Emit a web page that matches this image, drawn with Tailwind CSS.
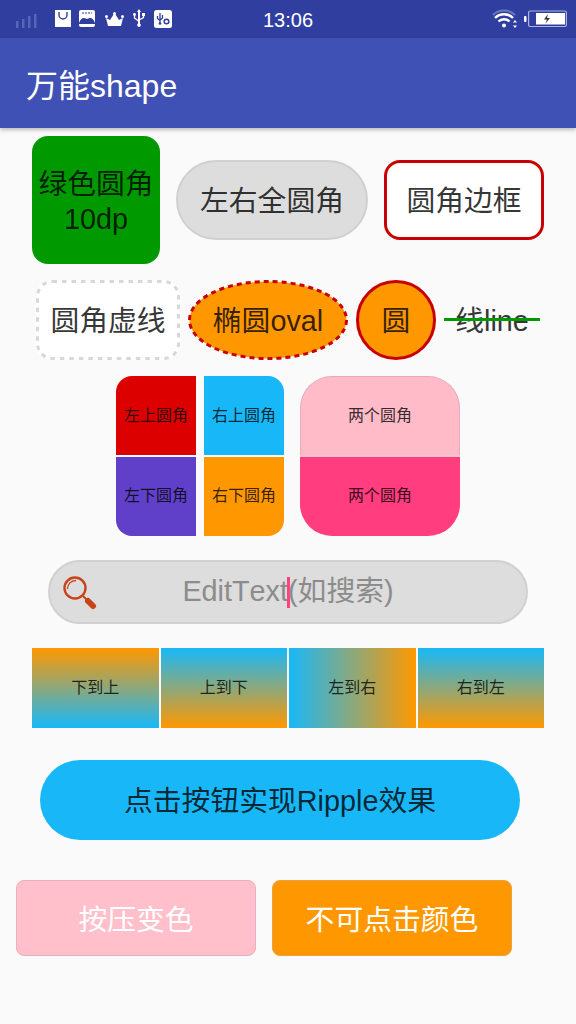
<!DOCTYPE html>
<html lang="zh-CN">
<head>
    <meta charset="UTF-8">
    <meta name="viewport" content="width=device-width, initial-scale=1.0">
    <title>万能shape</title>
    <script src="https://cdn.jsdelivr.net/npm/@tailwindcss/browser@4"></script>
</head>
<body class="bg-[#fafafa] h-[1024px] w-[576px] overflow-hidden font-['Liberation_Sans','Noto_Sans_CJK_SC',sans-serif] text-black/80">
    <!-- Status bar -->
    <div class="h-[38px] bg-[#303f9f] grid grid-cols-[1fr_auto_1fr] items-center pl-[16px] pr-[9px] text-white">
        <div class="flex items-center">
            <svg width="22" height="14" viewBox="0 0 22 14" class="mt-[4px]" fill="#5566b4">
                <rect x="0" y="7" width="2.500" height="7"/><rect x="6" y="5" width="2.500" height="9"/><rect x="12" y="2" width="2.500" height="12"/><rect x="18" y="0" width="2.500" height="14"/>
            </svg>
            <!-- bag -->
            <svg width="16" height="17" viewBox="0 0 16 17" class="ml-[17px] -mt-[1px]">
                <path d="M0 0h16v17H0z" fill="#fff"/><path d="M4 2v3a4 4 0 0 0 8 0V2" fill="none" stroke="#303f9f" stroke-width="1.400"/>
            </svg>
            <!-- bed-like app icon -->
            <svg width="16" height="17" viewBox="0 0 16 17" class="ml-[8px] -mt-[1px]">
                <rect width="16" height="17" rx="2" fill="#fff"/><path d="M3 3h10" stroke="#303f9f" stroke-width="1.200" stroke-dasharray="2 1"/><path d="M0 13c2-5 4-6 8-4 4-2 6-1 8 4v1H0z" fill="#303f9f"/>
            </svg>
            <!-- crown -->
            <svg width="19" height="15" viewBox="0 0 19 15" class="ml-[10px]" fill="#fff">
                <path d="M3 14 1 6l4 2 4.500-7L14 8l4-2-2 8z"/><circle cx="1.500" cy="4.500" r="1.500"/><circle cx="9.500" cy="1.500" r="1.500"/><circle cx="17.500" cy="4.500" r="1.500"/>
            </svg>
            <!-- usb -->
            <svg width="12" height="20" viewBox="0 0 12 20" class="ml-[9px]" fill="#fff">
                <path d="M6 0 8 3H7v11.500a1.800 1.800 0 1 1-2 0V3H4z"/><path d="M1.500 6v3l4 3M10.500 6v2.500L6 11" fill="none" stroke="#fff" stroke-width="1.300"/><circle cx="1.500" cy="5.500" r="1.400"/><rect x="9" y="4" width="3" height="3"/>
            </svg>
            <!-- usb settings -->
            <svg width="18" height="18" viewBox="0 0 18 18" class="ml-[9px] -mt-[1px]">
                <rect width="18" height="18" rx="2.500" fill="#fff"/><path d="M6 3v10M3.500 6v2.500L6 10.500M8.500 5v3L6 10" fill="none" stroke="#303f9f" stroke-width="1.300"/><circle cx="6" cy="13.500" r="1.300" fill="#303f9f"/><circle cx="12.500" cy="11.500" r="2.300" fill="none" stroke="#303f9f" stroke-width="1.500"/>
            </svg>
        </div>
        <span class="text-[20px] leading-none mt-[1px] -ml-[7px]">13:06</span>
        <div class="ml-auto flex items-center">
            <!-- wifi -->
            <svg width="26" height="20" viewBox="0 0 26 20">
                <path d="M1 6C7 0 17 0 23 6" fill="none" stroke="#6a78c0" stroke-width="2"/>
                <path d="M3 9c5-5 13-5 18 0M6.500 12.500c3-3 8-3 11 0" fill="none" stroke="#fff" stroke-width="2.400"/>
                <circle cx="12" cy="16.500" r="2" fill="#fff"/>
                <path d="M23 11l2 2.500h-4zM23 19l2-2.500h-4z" fill="#fff"/>
            </svg>
            <!-- battery -->
            <svg width="43" height="18" viewBox="0 0 43 18" class="ml-[6px]">
                <rect x="0" y="6" width="2.500" height="6" rx="1" fill="#fff"/>
                <rect x="4.600" y="1" width="37.800" height="15.500" rx="1.500" fill="none" stroke="#aab3e0" stroke-width="1.200"/>
                <rect x="12" y="3" width="29" height="11.500" fill="#fff"/>
                <path d="M24 4l-4 5.500h3L21.500 13.500 26 8h-3z" fill="#333"/>
            </svg>
        </div>
    </div>

    <!-- Toolbar -->
    <div class="h-[90px] bg-[#3f51b5] flex items-center pl-[26px] pt-[6px] shadow-[0_2px_4px_rgba(0,0,0,0.25)] relative">
        <span class="text-white text-[32px] leading-none">万能shape</span>
    </div>

    <!-- Row 1 -->
    <div class="flex items-center gap-[16px] pl-[32px] mt-[8px] text-[28.8px]">
        <div class="w-[128px] h-[128px] pt-[4px] bg-[#009900] rounded-[16px] flex items-center justify-center text-center leading-[35px]">绿色圆角<br>10dp</div>
        <div class="w-[192px] h-[80px] pt-[4px] bg-[#dddddd] border-2 border-[#d0d0d0] rounded-full flex items-center justify-center">左右全圆角</div>
        <div class="w-[160px] h-[80px] pt-[4px] bg-white border-[3px] border-[#c80000] rounded-[16px] flex items-center justify-center">圆角边框</div>
    </div>

    <!-- Row 2 -->
    <div class="flex items-center gap-[8px] pl-[36px] mt-[16px] text-[28.8px]">
        <div class="relative w-[144px] h-[80px] pt-[4px] bg-white rounded-[16px] flex items-center justify-center">
            <svg class="absolute inset-0" width="144" height="80"><rect x="1.500" y="1.500" width="141" height="77" rx="15" fill="none" stroke="#d8d8d8" stroke-width="3" stroke-dasharray="4.500 5"/></svg>
            <span class="relative">圆角虚线</span>
        </div>
        <div class="relative w-[160px] h-[80px] pt-[4px] flex items-center justify-center">
            <svg class="absolute inset-0" width="160" height="80"><ellipse cx="80" cy="40" rx="78.500" ry="38.500" fill="#ff9800" stroke="#c80000" stroke-width="3" stroke-dasharray="5 4"/></svg>
            <span class="relative">椭圆oval</span>
        </div>
        <div class="w-[80px] h-[80px] pt-[4px] bg-[#ff9800] border-[3px] border-[#c80000] rounded-full flex items-center justify-center">圆</div>
        <div class="relative w-[96px] h-[80px] pt-[4px] flex items-center justify-center">
            <span>线line</span>
            <div class="absolute left-0 right-0 top-[38px] h-[3px] bg-[#009900]"></div>
        </div>
    </div>

    <!-- Corners -->
    <div class="flex gap-[16px] pl-[116px] mt-[16px] text-[16px]">
        <div class="grid grid-cols-[80px_80px] grid-rows-[79px_79px] gap-x-[8px] gap-y-[2px]">
            <div class="bg-[#dd0000] rounded-tl-[16px] flex items-center justify-center">左上圆角</div>
            <div class="bg-[#18b8f8] rounded-tr-[16px] flex items-center justify-center">右上圆角</div>
            <div class="bg-[#6040c8] rounded-bl-[16px] pb-[2px] flex items-center justify-center">左下圆角</div>
            <div class="bg-[#ff9800] rounded-br-[16px] pb-[2px] flex items-center justify-center">右下圆角</div>
        </div>
        <div class="w-[160px] grid grid-rows-[79px_2px_79px]">
            <div class="bg-[#ffbcc8] rounded-t-[32px] border-t border-x border-[#e8aab8] flex items-center justify-center">两个圆角</div>
            <div class="bg-[#f4c4cf]"></div>
            <div class="bg-[#ff3d7f] rounded-b-[32px] pb-[2px] flex items-center justify-center">两个圆角</div>
        </div>
    </div>

    <!-- Search -->
    <div class="ml-[48px] mt-[24px] w-[480px] h-[64px] bg-[#dddddd] border-2 border-[#d0d0d0] rounded-full grid grid-cols-[1fr_auto_1fr] items-center text-[28.8px] text-[#8c8c8c]">
        <svg width="34" height="34" viewBox="0 0 34 34" class="ml-[13px] mt-[2px]">
            <circle cx="12" cy="12" r="10.500" fill="none" stroke="#c8431a" stroke-width="2.400"/>
            <path d="M4.500 13c0-5 3.500-8.500 8.500-8.500" fill="none" stroke="#c8431a" stroke-width="1.400"/>
            <path d="M20 20l4 4" stroke="#c8431a" stroke-width="2"/>
            <path d="M25 25l5 5" stroke="#c8431a" stroke-width="6" stroke-linecap="round"/>
        </svg>
        <div class="relative [font-kerning:none]">EditText<span class="inline-block w-[3px] h-[31px] bg-[#ff4081] -ml-[1px] -mr-[2px] align-[-7px]"></span>(如搜索)</div>
        <div></div>
    </div>

    <!-- Gradients -->
    <div class="grid grid-cols-4 gap-[2px] w-[512px] ml-[32px] mt-[24px] h-[80px] text-[16px]">
        <div class="flex items-center justify-center bg-[linear-gradient(to_top,#18b8f8,#ff9800)]">下到上</div>
        <div class="flex items-center justify-center bg-[linear-gradient(to_bottom,#18b8f8,#ff9800)]">上到下</div>
        <div class="flex items-center justify-center bg-[linear-gradient(to_right,#18b8f8,#ff9800)]">左到右</div>
        <div class="flex items-center justify-center bg-[linear-gradient(to_bottom,#18b8f8,#ff9800)]">右到左</div>
    </div>

    <!-- Ripple -->
    <div class="ml-[40px] mt-[32px] w-[480px] h-[80px] pt-[4px] bg-[#18b8f8] rounded-full flex items-center justify-center text-[28.8px]">点击按钮实现Ripple效果</div>

    <!-- Buttons -->
    <div class="flex gap-[16px] pl-[16px] mt-[40px] text-[28.8px] text-white">
        <div class="w-[240px] h-[76px] pt-[5px] bg-[#ffc0cb] border border-[#e8b0bc] rounded-[8px] flex items-center justify-center">按压变色</div>
        <div class="w-[240px] h-[76px] pt-[5px] bg-[#ff9800] border border-[#eda040] rounded-[8px] flex items-center justify-center">不可点击颜色</div>
    </div>
</body>
</html>
